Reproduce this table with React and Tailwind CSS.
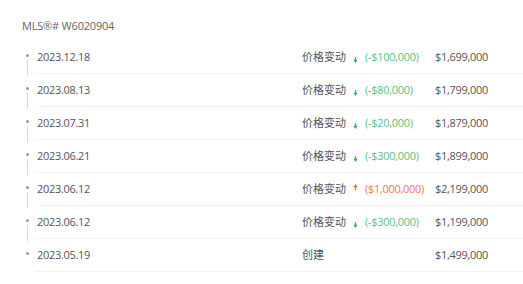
const rows = [
  { date: "2023.12.18", label: "价格变动", dir: "down", change: "(-$100,000)", price: "$1,699,000" },
  { date: "2023.08.13", label: "价格变动", dir: "down", change: "(-$80,000)", price: "$1,799,000" },
  { date: "2023.07.31", label: "价格变动", dir: "down", change: "(-$20,000)", price: "$1,879,000" },
  { date: "2023.06.21", label: "价格变动", dir: "down", change: "(-$300,000)", price: "$1,899,000" },
  { date: "2023.06.12", label: "价格变动", dir: "up", change: "($1,000,000)", price: "$2,199,000" },
  { date: "2023.06.12", label: "价格变动", dir: "down", change: "(-$300,000)", price: "$1,199,000" },
  { date: "2023.05.19", label: "创建", dir: null, change: "", price: "$1,499,000" },
];

function Arrow({ dir }) {
  if (dir === "down") {
    return (
      <svg width="5" height="6" viewBox="0 0 5 6" className="mt-[5px]">
        <path d="M2.5 0 V4" stroke="#3fae5f" strokeWidth="1.3" />
        <path d="M0.3 2.8 L2.5 5.9 L4.7 2.8 Z" fill="#3fae5f" />
      </svg>
    );
  }
  return (
    <svg width="5" height="6" viewBox="0 0 5 6" className="-mt-[5px]">
      <path d="M2.5 6 V2" stroke="#f26b3a" strokeWidth="1.3" />
      <path d="M0.3 3.2 L2.5 0.1 L4.7 3.2 Z" fill="#f26b3a" />
    </svg>
  );
}

export default function App() {
  return (
    <div
      className="w-[523px] h-[284px] bg-white pl-[22px] pt-[17px] text-[11px] text-[#555]"
      style={{ fontFamily: '"Open Sans", "Noto Sans CJK SC", sans-serif' }}
    >
      <div className="h-[18px] leading-[18px] text-[#666] tracking-[-0.2px]">MLS®# W6020904</div>
      <div className="mt-[6px]">
        {rows.map((r, i) => (
          <div key={i} className="flex h-[33px]">
            <div className="relative w-[13px] shrink-0">
              <div className="absolute left-[4px] top-[13px] w-[3px] h-[3px] rounded-full bg-[#999]" />
              {i < rows.length - 1 && (
                <div className="absolute left-[5px] top-[19px] w-px h-[16px] bg-[#d9d9d9]" />
              )}
            </div>
            <div className="flex-1 flex items-center border-b border-[#f2f2f2] pl-[2px] tracking-[-0.3px]">
              <div className="flex-1 text-[#555]">{r.date}</div>
              <div className="w-[63px] flex items-center gap-[7px] text-[#555] tracking-normal">
                <span>{r.label}</span>
                {r.dir && <Arrow dir={r.dir} />}
              </div>
              <div
                className={
                  "w-[70px] " + (r.dir === "up" ? "text-[#f2784b]" : "text-[#5cc17f]")
                }
              >
                {r.change}
              </div>
              <div className="w-[88px] text-[#555]">{r.price}</div>
            </div>
          </div>
        ))}
      </div>
    </div>
  );
}
